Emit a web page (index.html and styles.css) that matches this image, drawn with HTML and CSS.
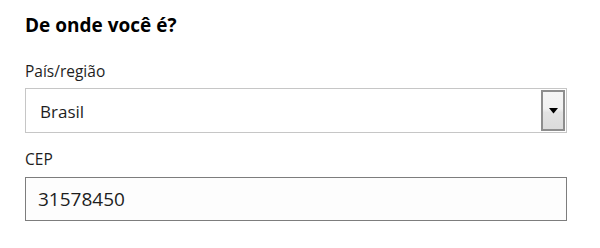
FILE: index.html
```html
<!DOCTYPE html>
<html lang="pt-BR">
<head>
<meta charset="utf-8">
<link rel="stylesheet" href="styles.css">
</head>
<body>
<div class="form">
  <h2 class="title">De onde você é?</h2>
  <div class="field field-country">
    <div class="label">País/região</div>
    <div class="select">
      <span class="select-value">Brasil</span>
      <span class="select-btn">
        <svg width="9" height="6" viewBox="0 0 9 6"><path d="M0 0H9L4.5 5.5Z" fill="#000"/></svg>
      </span>
    </div>
  </div>
  <div class="field field-zip">
    <div class="label">CEP</div>
    <div class="input">31578450</div>
  </div>
</div>
</body>
</html>
```
FILE: styles.css
```css
html, body {
  margin: 0;
  padding: 0;
  background: #fff;
}
.form {
  width: 542px;
  padding: 12px 0 0 25px;
  font-family: "Open Sans", "Noto Sans", sans-serif;
  color: #1e1e1e;
}
.title {
  margin: 0;
  font-size: 19px;
  font-weight: 700;
  line-height: 26px;
  color: #000;
}
.field {
  display: flex;
  flex-direction: column;
}
.label {
  font-size: 15.5px;
  line-height: 20px;
  margin-bottom: 7px;
}
.field-country .label {
  margin-top: 23px;
}
.field-zip .label {
  margin-top: 16px;
  margin-bottom: 8px;
}
.select {
  box-sizing: border-box;
  height: 45px;
  border: 1px solid #c6c6c6;
  display: flex;
  align-items: stretch;
  background: #fff;
}
.select-value {
  flex: 1;
  display: flex;
  align-items: center;
  padding: 2px 0 0 14px;
  font-size: 17px;
}
.select-btn {
  box-sizing: border-box;
  width: 24px;
  margin: 1px;
  border: 2px solid #8e8e8e;
  background: linear-gradient(#f5f5f5, #f2f2f2 45%, #e3e3e3 55%, #dcdcdc);
  display: flex;
  align-items: center;
  justify-content: center;
}
.input {
  box-sizing: border-box;
  height: 44px;
  border: 1px solid #7d7d7d;
  display: flex;
  align-items: center;
  padding-left: 12px;
  font-size: 19px;
  background: #fdfdfd;
}
```
